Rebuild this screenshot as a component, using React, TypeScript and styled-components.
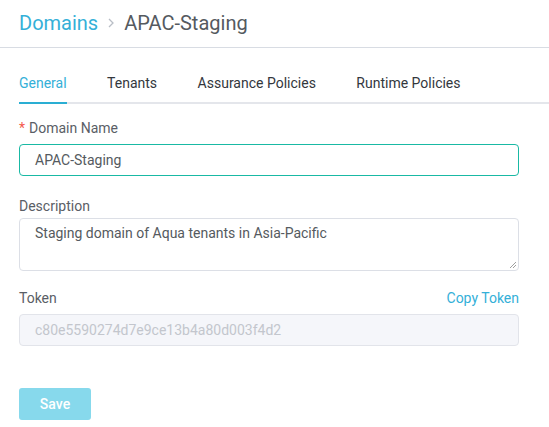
import React from "react";
import styled, { createGlobalStyle } from "styled-components";

const Global = createGlobalStyle`
  html, body { margin: 0; padding: 0; background: #fff; }
  body { font-family: Roboto, "Liberation Sans", Arial, sans-serif; }
  * { box-sizing: border-box; }
`;

const Page = styled.div`
  width: 549px;
  height: 427px;
  background: #fff;
  overflow: hidden;
`;

const Header = styled.div`
  height: 48px;
  padding: 0 19px 2px;
  display: flex;
  align-items: center;
  gap: 8px;
  border-bottom: 1px solid #d8dce3;
  font-size: 20px;
`;

const Crumb = styled.span<{ $active?: boolean }>`
  color: ${(p) => (p.$active ? "#555a60" : "#34b0d8")};
`;

const Sep = styled.span`
  display: flex;
  align-items: center;
`;

const Tabs = styled.div`
  margin: 16px 0 0 19px;
  display: flex;
  gap: 40.5px;
  border-bottom: 2px solid #e4e6eb;
`;

const Tab = styled.div<{ $active?: boolean }>`
  font-size: 14px;
  line-height: 20px;
  padding: 9px 0;
  margin-bottom: -2px;
  color: ${(p) => (p.$active ? "#34b0d8" : "#33373d")};
  border-bottom: 2px solid ${(p) => (p.$active ? "#2aaed3" : "transparent")};
`;

const Form = styled.div`
  padding: 15px 30px 0 19px;
  display: flex;
  flex-direction: column;
`;

const Field = styled.div<{ $mb: number }>`
  margin-bottom: ${(p) => p.$mb}px;
`;

const LabelRow = styled.div<{ $mb?: number }>`
  display: flex;
  justify-content: space-between;
  font-size: 14px;
  line-height: 18px;
  color: #5a5e66;
  margin-bottom: ${(p) => p.$mb ?? 7}px;
`;

const Req = styled.span`
  color: #f4594c;
  margin-right: 4px;
`;

const Link = styled.span`
  color: #34b0d8;
`;

const Input = styled.div<{ $focus?: boolean; $disabled?: boolean }>`
  height: 32px;
  border: 1px solid ${(p) => (p.$focus ? "#19b9a4" : p.$disabled ? "#e2e4ea" : "#dcdfe6")};
  border-radius: 4px;
  background: ${(p) => (p.$disabled ? "#f5f6fa" : "#fff")};
  padding: 0 15px;
  display: flex;
  align-items: center;
  font-size: 14px;
  color: ${(p) => (p.$disabled ? "#c3c6cd" : "#555a60")};
`;

const TextArea = styled.div`
  position: relative;
  height: 53px;
  border: 1px solid #dcdfe6;
  border-radius: 4px;
  padding: 4px 15px;
  font-size: 14px;
  line-height: 20px;
  color: #555a60;
`;

const Grip = styled.svg`
  position: absolute;
  right: 1px;
  bottom: 1px;
`;

const Button = styled.button`
  width: 72px;
  height: 32px;
  border: none;
  border-radius: 3px;
  background: #87d9ec;
  color: #fff;
  font-family: Roboto, "Liberation Sans", Arial, sans-serif;
  font-size: 14px;
  font-weight: 500;
  padding: 0;
`;

export default function App() {
  return (
    <Page>
      <Global />
      <Header>
        <Crumb>Domains</Crumb>
        <Sep>
          <svg width="10" height="14" viewBox="0 0 10 14">
            <path d="M3 3l4 4-4 4" fill="none" stroke="#b9bec6" strokeWidth="1.3" />
          </svg>
        </Sep>
        <Crumb $active>APAC-Staging</Crumb>
      </Header>
      <Tabs>
        <Tab $active>General</Tab>
        <Tab>Tenants</Tab>
        <Tab>Assurance Policies</Tab>
        <Tab>Runtime Policies</Tab>
      </Tabs>
      <Form>
        <Field $mb={21}>
          <LabelRow>
            <span>
              <Req>*</Req>Domain Name
            </span>
          </LabelRow>
          <Input $focus>APAC-Staging</Input>
        </Field>
        <Field $mb={18}>
          <LabelRow $mb={3}>
            <span>Description</span>
          </LabelRow>
          <TextArea>
            Staging domain of Aqua tenants in Asia-Pacific
            <Grip width="8" height="8" viewBox="0 0 8 8">
              <path d="M7 1L1 7M7 4L4 7" stroke="#888" strokeWidth="0.8" />
            </Grip>
          </TextArea>
        </Field>
        <Field $mb={42}>
          <LabelRow>
            <span>Token</span>
            <Link>Copy Token</Link>
          </LabelRow>
          <Input $disabled>c80e5590274d7e9ce13b4a80d003f4d2</Input>
        </Field>
        <div>
          <Button>Save</Button>
        </div>
      </Form>
    </Page>
  );
}
